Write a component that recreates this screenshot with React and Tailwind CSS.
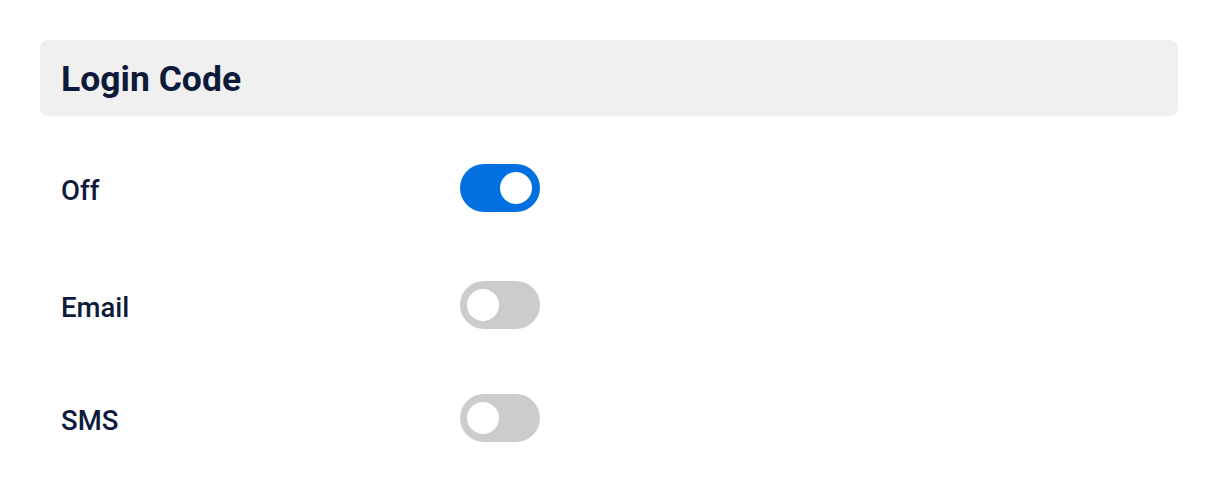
import { useState } from "react";

const options = [
  { key: "off", label: "Off", mt: "mt-[48px]" },
  { key: "email", label: "Email", mt: "mt-[69px]" },
  { key: "sms", label: "SMS", mt: "mt-[65px]" },
];

function Toggle({ on, onClick }) {
  return (
    <button
      type="button"
      onClick={onClick}
      className={
        "relative h-12 w-20 rounded-full transition " +
        (on ? "bg-[#006fe0]" : "bg-[#cccccc]")
      }
    >
      <span
        className={
          "absolute top-2 h-8 w-8 rounded-full bg-white transition-all " +
          (on ? "left-[40px]" : "left-[7px]")
        }
      />
    </button>
  );
}

export default function App() {
  const [selected, setSelected] = useState("off");

  return (
    <div
      className="min-h-screen bg-white px-10 pt-10 text-[#0e1a3a]"
      style={{ fontFamily: "Roboto, 'Liberation Sans', sans-serif" }}
    >
      {/* Header */}
      <div className="flex h-[76px] items-center rounded-lg bg-[#f0f0f0] pl-[21px] pt-[4px]">
        <h1 className="text-[35.5px] font-bold leading-none">Login Code</h1>
      </div>

      {/* Options */}
      <div className="flex flex-col pl-[21px]">
        {options.map((o) => (
          <div key={o.key} className={"flex items-center " + o.mt}>
            <span className="w-[399px] pt-[6px] text-[27.5px] font-medium leading-none">{o.label}</span>
            <Toggle on={selected === o.key} onClick={() => setSelected(o.key)} />
          </div>
        ))}
      </div>
    </div>
  );
}
